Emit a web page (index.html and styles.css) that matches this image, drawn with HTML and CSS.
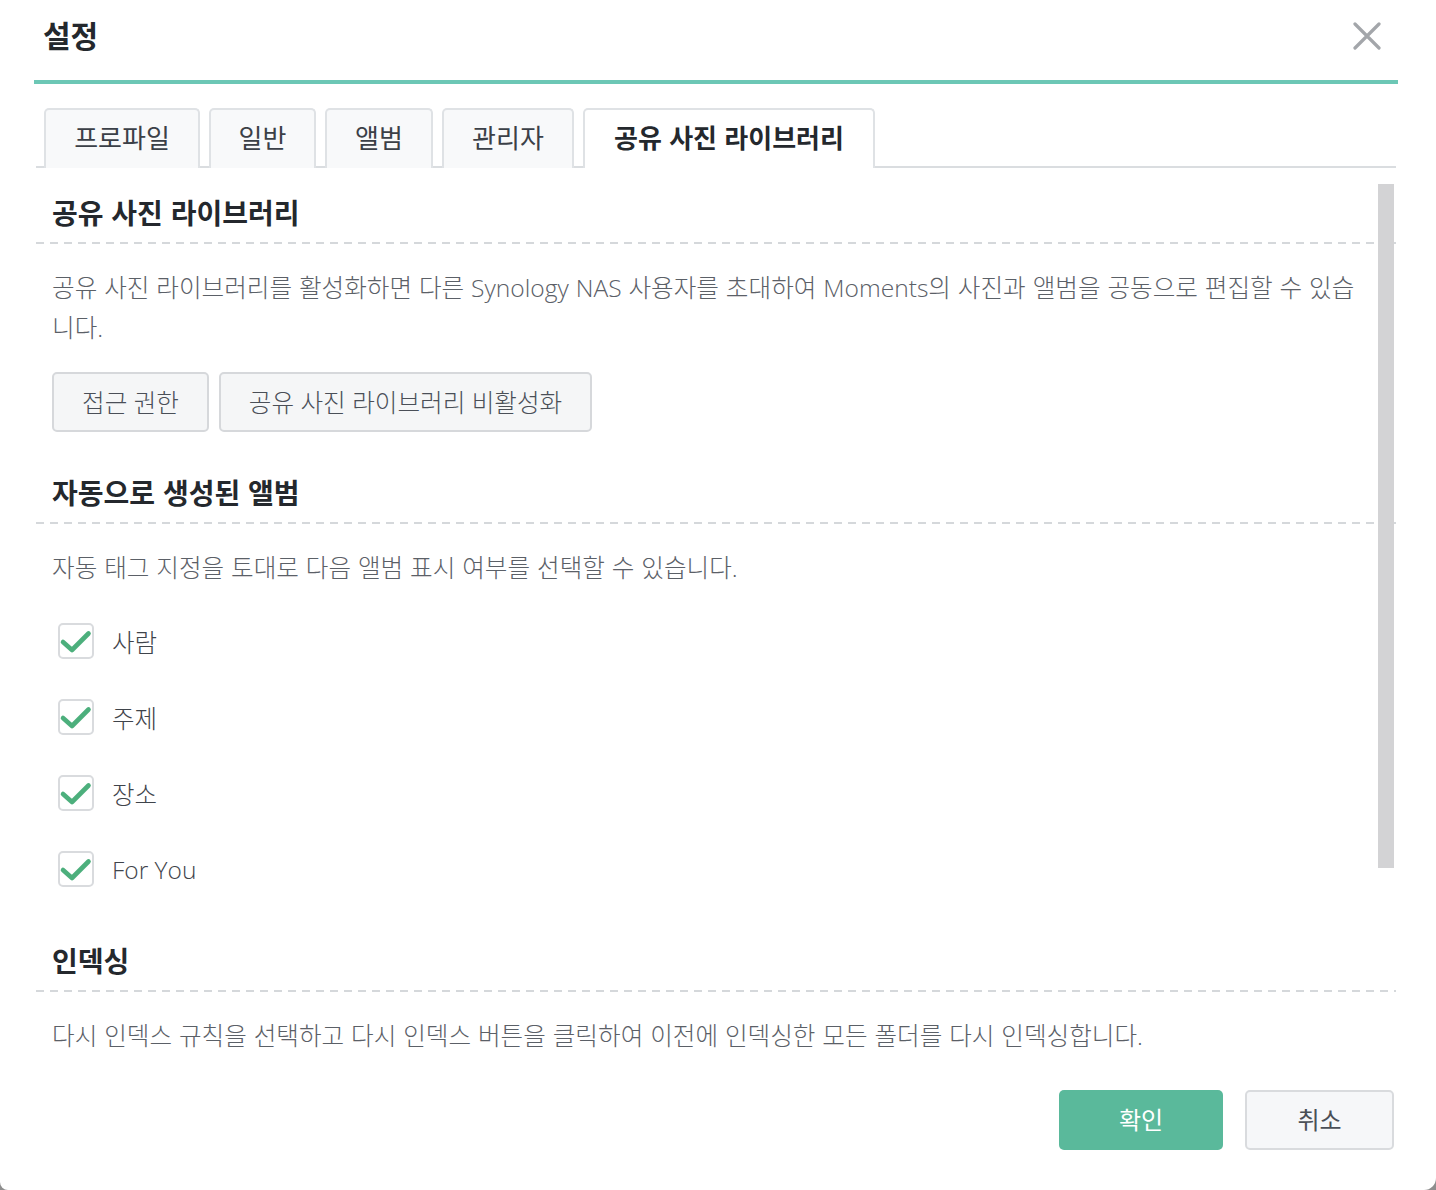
FILE: index.html
```html
<!DOCTYPE html>
<html lang="ko">
<head>
<meta charset="utf-8">
<title>설정</title>
<link rel="stylesheet" href="styles.css">
</head>
<body>
<div class="dialog">
  <header class="header">
    <h1 class="title">설정</h1>
    <button class="close" aria-label="닫기">
      <svg width="28" height="28" viewBox="0 0 28 28"><path d="M2 2 L26 26 M26 2 L2 26" stroke="#a3a6aa" stroke-width="3.2" stroke-linecap="round" fill="none"/></svg>
    </button>
  </header>
  <div class="accent"></div>
  <nav class="tabs">
    <div class="tab t1">프로파일</div>
    <div class="tab t2">일반</div>
    <div class="tab t3">앨범</div>
    <div class="tab t4">관리자</div>
    <div class="tab t5 active">공유 사진 라이브러리</div>
  </nav>
  <main class="content">
    <div class="scrollbar"></div>
    <section class="section">
      <h2 class="section-title">공유 사진 라이브러리</h2>
      <div class="dash"></div>
      <p class="desc">공유 사진 라이브러리를 활성화하면 다른 Synology NAS 사용자를 초대하여 Moments의 사진과 앨범을 공동으로 편집할 수 있습니다.</p>
      <div class="btn-row">
        <button class="btn b1">접근 권한</button>
        <button class="btn b2">공유 사진 라이브러리 비활성화</button>
      </div>
    </section>
    <section class="section s2">
      <h2 class="section-title">자동으로 생성된 앨범</h2>
      <div class="dash"></div>
      <p class="desc">자동 태그 지정을 토대로 다음 앨범 표시 여부를 선택할 수 있습니다.</p>
      <ul class="checks">
        <li class="check-row"><span class="cb"><svg width="36" height="36" viewBox="0 0 36 36"><path d="M5 19 L14 27 L30.5 10.5" stroke="#4caf7c" stroke-width="4.6" stroke-linecap="round" stroke-linejoin="round" fill="none"/></svg></span><span class="lbl">사람</span></li>
        <li class="check-row"><span class="cb"><svg width="36" height="36" viewBox="0 0 36 36"><path d="M5 19 L14 27 L30.5 10.5" stroke="#4caf7c" stroke-width="4.6" stroke-linecap="round" stroke-linejoin="round" fill="none"/></svg></span><span class="lbl">주제</span></li>
        <li class="check-row"><span class="cb"><svg width="36" height="36" viewBox="0 0 36 36"><path d="M5 19 L14 27 L30.5 10.5" stroke="#4caf7c" stroke-width="4.6" stroke-linecap="round" stroke-linejoin="round" fill="none"/></svg></span><span class="lbl">장소</span></li>
        <li class="check-row"><span class="cb"><svg width="36" height="36" viewBox="0 0 36 36"><path d="M5 19 L14 27 L30.5 10.5" stroke="#4caf7c" stroke-width="4.6" stroke-linecap="round" stroke-linejoin="round" fill="none"/></svg></span><span class="lbl">For You</span></li>
      </ul>
    </section>
    <section class="section s3">
      <h2 class="section-title">인덱싱</h2>
      <div class="dash"></div>
      <p class="desc">다시 인덱스 규칙을 선택하고 다시 인덱스 버튼을 클릭하여 이전에 인덱싱한 모든 폴더를 다시 인덱싱합니다.</p>
    </section>
  </main>
  <footer class="footer">
    <button class="fbtn ok">확인</button>
    <button class="fbtn cancel">취소</button>
  </footer>
</div>
</body>
</html>
```
FILE: styles.css
```css
html, body {
  margin: 0;
  padding: 0;
  background: #8e8e8e;
}
* { box-sizing: border-box; }
.dialog {
  width: 1436px;
  height: 1190px;
  background: #fff;
  border-radius: 0 0 12px 8px;
  overflow: hidden;
  font-family: "Open Sans", "Noto Sans CJK KR", sans-serif;
  color: #3b4047;
  display: flex;
  flex-direction: column;
}
.header {
  height: 80px;
  display: flex;
  align-items: center;
  justify-content: space-between;
  padding: 0 55px 12px 43px;
}
.title {
  margin: 0;
  font-family: "Noto Sans CJK KR", sans-serif;
  font-size: 30px;
  font-weight: 700;
  color: #24282d;
  line-height: 1;
}
.close {
  border: 0;
  background: none;
  padding: 0;
  width: 28px;
  height: 28px;
  display: block;
  margin-top: 4px;
}
.close svg { display: block; }
.accent {
  height: 4px;
  background: #6cc7b5;
  margin: 0 38px 0 34px;
}
.tabs {
  display: flex;
  gap: 9px;
  margin: 24px 40px 0 36px;
  padding-left: 8px;
  border-bottom: 2px solid #dadde0;
  height: 60px;
}
.tab {
  height: 60px;
  margin-bottom: -2px;
  border: 2px solid #dfe2e5;
  border-bottom: 0;
  border-radius: 5px 5px 0 0;
  background: #f8f9fa;
  display: flex;
  align-items: center;
  justify-content: center;
  font-family: "Noto Sans CJK KR", sans-serif;
  font-size: 26px;
  font-weight: 400;
  color: #3b4047;
  padding-bottom: 6px;
}
.t1 { width: 156px; }
.t2 { width: 107px; }
.t3 { width: 108px; }
.t4 { width: 132px; }
.t5 { width: 292px; }
.tab.active {
  background: #fff;
  font-weight: 700;
  color: #24282d;
  height: 60px;
}
.content {
  position: relative;
  flex: 1;
  margin: 0 40px 0 36px;
}
.scrollbar {
  position: absolute;
  left: 1342px;
  top: 16px;
  width: 16px;
  height: 684px;
  background: #d3d3d5;
}
.section { padding-top: 24px; }
.section-title {
  margin: 0;
  padding: 0 16px;
  font-family: "Noto Sans CJK KR", sans-serif;
  font-size: 28px;
  font-weight: 700;
  line-height: 40px;
  color: #24282d;
}
.dash {
  margin-top: 10px;
  height: 2px;
  background: repeating-linear-gradient(to right, #d5d8db 0 8px, transparent 8px 14px);
}
.desc {
  margin: 24px 0 0;
  padding: 0 30px 0 16px;
  font-size: 24.6px;
  font-weight: 300;
  line-height: 40px;
  color: #5b6067;
}
.desc { word-spacing: 0.5px; }
.btn-row {
  display: flex;
  gap: 10px;
  padding-left: 16px;
  margin-top: 24px;
}
.btn {
  height: 60px;
  border: 2px solid #d6d8db;
  border-radius: 5px;
  background: #f5f6f7;
  font-family: "Open Sans", "Noto Sans CJK KR", sans-serif;
  font-size: 24.6px;
  font-weight: 300;
  color: #4a4f57;
  padding: 0 0 2px;
}
.b1 { width: 157px; }
.b2 { width: 373px; }
.s2 { padding-top: 40px; }
.checks {
  list-style: none;
  margin: 15px 0 0;
  padding: 0 0 0 22px;
}
.check-row {
  display: flex;
  align-items: center;
  gap: 18px;
  height: 76px;
}
.cb {
  width: 36px;
  height: 36px;
  border: 2px solid #d9dbde;
  border-radius: 5px;
  position: relative;
}
.cb svg { position: absolute; left: -2px; top: -2px; }
.lbl {
  font-size: 24.5px;
  font-weight: 300;
  color: #3f444b;
}
.s3 { padding-top: 33px; }
.footer {
  display: flex;
  justify-content: flex-end;
  gap: 22px;
  padding: 0 42px 40px 0;
}
.fbtn {
  height: 60px;
  border-radius: 5px;
  font-family: "Noto Sans CJK KR", sans-serif;
  font-size: 24px;
  font-weight: 400;
  padding: 0 0 4px;
}
.ok {
  width: 164px;
  background: #5ab99b;
  border: 0;
  color: #fff;
}
.cancel {
  width: 149px;
  background: #f6f7f9;
  border: 2px solid #d9dbde;
  color: #4a4f57;
}
```
